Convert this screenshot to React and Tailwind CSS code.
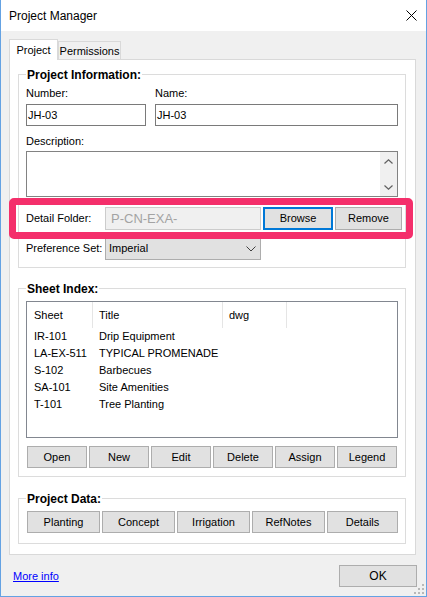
import React from 'react'

const sheets = [
    ['IR-101', 'Drip Equipment'],
    ['LA-EX-511', 'TYPICAL PROMENADE'],
    ['S-102', 'Barbecues'],
    ['SA-101', 'Site Amenities'],
    ['T-101', 'Tree Planting'],
]

const btn = 'h-[22px] bg-[#e1e1e1] border border-[#adadad] flex items-center justify-center text-[11px]'

const GroupBox = ({ title, className, children }) => (
    <div className={`relative ml-[8px] w-[388px] border border-[#dcdcdc] pl-[7px] pt-[12px] ${className}`}>
        <span className="absolute left-[7px] -top-[7px] bg-white px-[1px] text-[12px] font-bold leading-[14px]">{title}</span>
        {children}
    </div>
)

const Chevron = ({ up }) => (
    <svg width="9" height="5" viewBox="0 0 9 5" fill="none">
        <path d={up ? 'M0.5 4.5 L4.5 0.8 L8.5 4.5' : 'M0.5 0.5 L4.5 4.2 L8.5 0.5'} stroke="#606060" strokeWidth="1.2" />
    </svg>
)

const App = () => {
    return (
        <div className="relative w-[427px] h-[597px] bg-[#f0f0f0] border-x border-b border-[#64a2e3] flex flex-col overflow-hidden text-black text-[11px] font-['Liberation_Sans',Arial,sans-serif]">
            {/* title bar */}
            <div className="h-[31px] shrink-0 bg-white flex items-center justify-between pl-[8px] pr-[9px]">
                <span className="text-[12px]">Project Manager</span>
                <svg width="11" height="11" viewBox="0 0 11 11">
                    <path d="M0.5 0.5 L10.5 10.5 M10.5 0.5 L0.5 10.5" stroke="#000" strokeWidth="1" />
                </svg>
            </div>

            {/* tabs */}
            <div className="flex items-end pl-[8px] pt-[8px]">
                <div className="relative z-10 mb-[-1px] w-[49px] h-[21px] bg-white border-x border-t border-[#d9d9d9] flex items-center justify-center">Project</div>
                <div className="w-[63px] h-[18px] bg-[#f0f0f0] border-x border-t border-[#d9d9d9] flex items-center justify-center pt-[1px]">Permissions</div>
            </div>

            <div className="ml-[8px] w-[407px] h-[496px] shrink-0 bg-white border border-[#d9d9d9] flex flex-col">
                <GroupBox title="Project Information:" className="mt-[14px] h-[194px]">
                    <div className="flex gap-[9px]">
                        <div className="flex flex-col w-[120px]">
                            <span className="leading-[13px]">Number:</span>
                            <div className="mt-[4px] h-[22px] border border-[#7a7a7a] flex items-center pl-[1px]">JH-03</div>
                        </div>
                        <div className="flex flex-col w-[243px]">
                            <span className="leading-[13px]">Name:</span>
                            <div className="mt-[4px] h-[22px] border border-[#7a7a7a] flex items-center pl-[1px]">JH-03</div>
                        </div>
                    </div>
                    <div className="mt-[9px] leading-[13px]">Description:</div>
                    <div className="mt-[3px] w-[372px] h-[46px] border border-[#828282] flex justify-end">
                        <div className="w-[17px] h-full bg-[#f0f0f0] flex flex-col items-center justify-between pt-[7px] pb-[6px]">
                            <Chevron up />
                            <Chevron />
                        </div>
                    </div>

                    <div className="relative mt-[10px] h-[23px] flex items-center">
                        <span className="w-[79px]">Detail Folder:</span>
                        <div className="w-[156px] h-[23px] bg-[#f0f0f0] border border-[#cccccc] flex items-center pl-[5px] text-[13px] text-[#a3a3a3]">P-CN-EXA-</div>
                        <div className="ml-[2px] w-[70px] h-[23px] bg-[#e1e1e1] border-2 border-[#0078d7] flex items-center justify-center">Browse</div>
                        <div className={`${btn} ml-[2px] w-[67px] h-[23px]`}>Remove</div>
                        <div className="absolute -left-[17px] -top-[9px] w-[404px] h-[41px] border-[7px] border-[#f42f6b] rounded-[5px] pointer-events-none"></div>
                    </div>

                    <div className="mt-[7px] h-[23px] flex items-center">
                        <span className="w-[79px]">Preference Set:</span>
                        <div className="w-[156px] h-[23px] bg-[#e1e1e1] border border-[#adadad] flex items-center justify-between pl-[3px] pr-[4px]">
                            <span>Imperial</span>
                            <svg width="10" height="6" viewBox="0 0 10 6" fill="none">
                                <path d="M0.5 0.5 L5 5 L9.5 0.5" stroke="#404040" strokeWidth="1" />
                            </svg>
                        </div>
                    </div>
                </GroupBox>

                <GroupBox title="Sheet Index:" className="mt-[20px] h-[189px]">
                    <div className="w-[372px] h-[137px] border border-[#828790] flex flex-col">
                        <div className="flex h-[26px] shrink-0">
                            <div className="w-[66px] border-r border-[#e5e5e5] pl-[7px] flex items-center">Sheet</div>
                            <div className="w-[130px] border-r border-[#e5e5e5] pl-[6px] flex items-center">Title</div>
                            <div className="w-[64px] border-r border-[#e5e5e5] pl-[6px] flex items-center">dwg</div>
                        </div>
                        {sheets.map(([sheet, title]) => (
                            <div key={sheet} className="flex h-[17px] items-center">
                                <span className="w-[66px] pl-[7px]">{sheet}</span>
                                <span className="pl-[6px]">{title}</span>
                            </div>
                        ))}
                    </div>
                    <div className="mt-[8px] ml-[1px] flex gap-[2px]">
                        {['Open', 'New', 'Edit', 'Delete', 'Assign', 'Legend'].map((label) => (
                            <div key={label} className={`${btn} w-[60px]`}>{label}</div>
                        ))}
                    </div>
                </GroupBox>

                <GroupBox title="Project Data:" className="mt-[21px] h-[46px]">
                    <div className="ml-[1px] flex gap-[2px]">
                        <div className={`${btn} w-[73px]`}>Planting</div>
                        <div className={`${btn} w-[73px]`}>Concept</div>
                        <div className={`${btn} w-[73px]`}>Irrigation</div>
                        <div className={`${btn} w-[73px]`}>RefNotes</div>
                        <div className={`${btn} w-[71px]`}>Details</div>
                    </div>
                </GroupBox>
            </div>

            {/* footer */}
            <div className="mt-[10px] flex items-center justify-between pl-[12px] pr-[9px]">
                <a href="#" className="text-[#0000ff] underline">More info</a>
                <div className={`${btn} w-[78px] text-[12px]`}>OK</div>
            </div>

            <svg className="absolute right-[2px] bottom-[2px]" width="10" height="10" viewBox="0 0 10 10" fill="#b8b8b8">
                <rect x="8" y="0" width="2" height="2" />
                <rect x="4" y="4" width="2" height="2" />
                <rect x="8" y="4" width="2" height="2" />
                <rect x="0" y="8" width="2" height="2" />
                <rect x="4" y="8" width="2" height="2" />
                <rect x="8" y="8" width="2" height="2" />
            </svg>
        </div>
    )
}

export default App
